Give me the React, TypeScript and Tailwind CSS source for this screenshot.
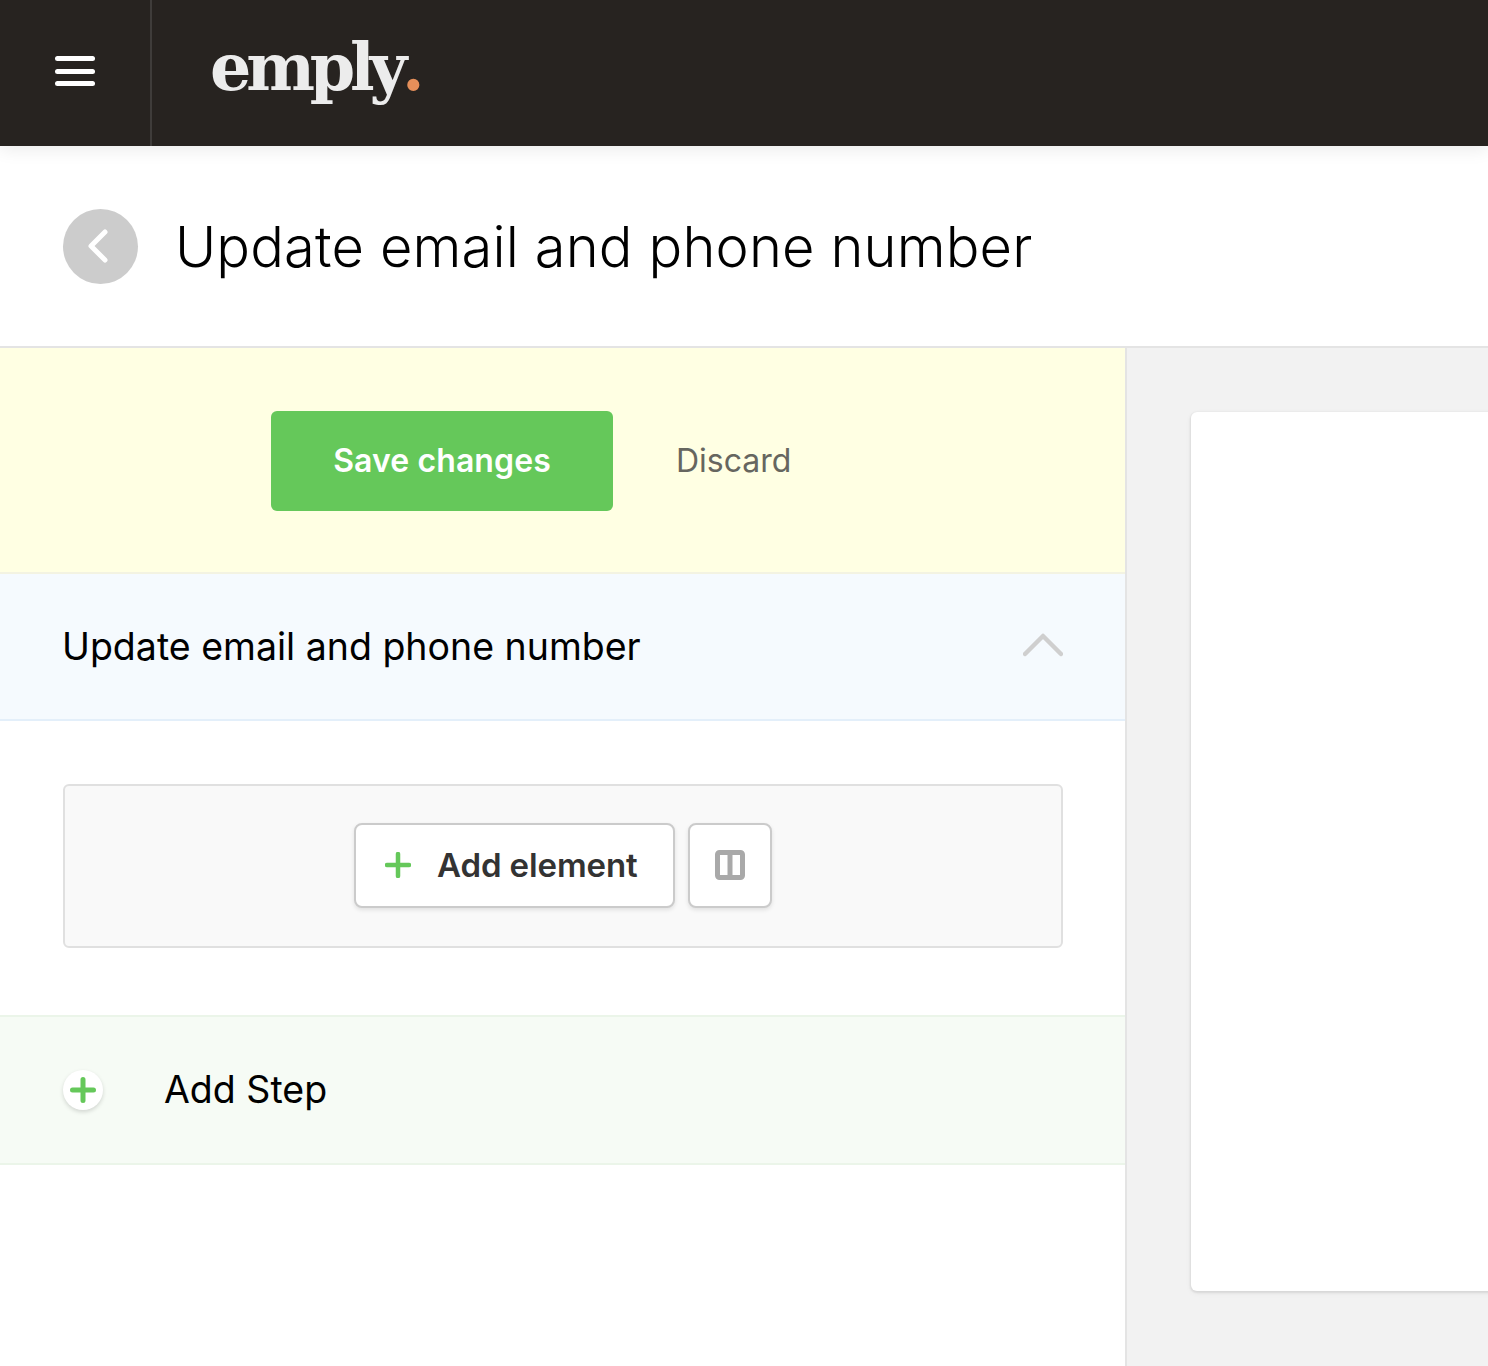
export default function App() {
  const sans = "font-['Inter','Lato',sans-serif]";
  return (
    <div className={`h-[1366px] w-[1488px] overflow-hidden bg-white flex flex-col ${sans}`}>
      <header className="relative z-10 flex h-[146px] shrink-0 bg-[#272320] shadow-[0_4px_16px_rgba(0,0,0,0.08)]">
        <div className="flex w-[152px] shrink-0 items-center justify-center border-r-2 border-[#3f3c3a]">
          <div className="mb-[4px] flex w-[40px] flex-col gap-[7.5px]">
            <span className="h-[5px] rounded-full bg-white" />
            <span className="h-[5px] rounded-full bg-white" />
            <span className="h-[5px] rounded-full bg-white" />
          </div>
        </div>
        <div className="ml-[58px] flex items-center pb-[12px] font-['DejaVu_Serif',serif] text-[65px] font-bold leading-none tracking-[-5.2px] text-[#ececec]">
          emply<span className="text-[#e58f5a]">.</span>
        </div>
      </header>
      <div className="flex h-[202px] shrink-0 items-center gap-[37px] border-b-2 border-[#e4e4e4] pl-[63px]">
        <div className="flex h-[75px] w-[75px] items-center justify-center rounded-full bg-[#cccccc]">
          <svg width="24" height="36" viewBox="0 0 24 36" fill="none" stroke="#fff" strokeWidth="5" strokeLinecap="round" strokeLinejoin="round" className="mr-[4px]">
            <path d="M18 4 L4 18 L18 32" />
          </svg>
        </div>
        <h1 className="pt-[2px] text-[56px] font-light leading-none tracking-[0.15px] text-black">Update email and phone number</h1>
      </div>
      <div className="flex min-h-0 flex-1">
        <div className="w-[1127px] shrink-0 border-r-2 border-[#e4e4e4]">
          <div className="flex h-[226px] items-center border-b-2 border-[#f3f3e2] bg-[#ffffe3] pl-[271px] pt-[2px]">
            <button className="flex h-[100px] w-[342px] items-center justify-center rounded-[6px] bg-[#65c85a] text-[32px] font-semibold tracking-[0.1px] text-white">Save changes</button>
            <span className="ml-[63px] text-[32px] text-[#66665f]">Discard</span>
          </div>
          <div className="flex h-[147px] items-center justify-between border-b-2 border-[#e3effa] bg-[#f5fafe] pl-[62px] pr-[62px]">
            <span className="text-[37.5px] leading-none text-black">Update email and phone number</span>
            <svg width="40" height="24" viewBox="0 0 40 24" fill="none" stroke="#cfcfcf" strokeWidth="4.5" strokeLinecap="round" strokeLinejoin="round" className="mb-[4px]">
              <path d="M2 21 L20 3 L38 21" />
            </svg>
          </div>
          <div className="h-[294px] px-[63px] pt-[63px]">
            <div className="flex h-[164px] w-[1000px] items-center justify-center gap-[13px] rounded-[6px] border-2 border-[#e0e0e0] bg-[#f9f9f9] pb-[1px]">
              <button className="flex h-[85px] w-[321px] items-center rounded-[8px] border-2 border-[#cbcbcb] bg-white pb-[1px] pl-[29px] shadow-[0_2px_4px_rgba(0,0,0,0.1)]">
                <svg width="26" height="26" viewBox="0 0 26 26" fill="none" stroke="#65c85a" strokeWidth="4.5" strokeLinecap="round">
                  <path d="M13 2 V24 M2 13 H24" />
                </svg>
                <span className="ml-[26px] text-[33px] font-semibold leading-none tracking-[-0.1px] text-[#333333]">Add element</span>
              </button>
              <button className="flex h-[85px] w-[84px] items-center justify-center rounded-[8px] border-2 border-[#cbcbcb] bg-white pb-[1px] shadow-[0_2px_4px_rgba(0,0,0,0.1)]">
                <svg width="30" height="30" viewBox="0 0 30 30" fill="none" stroke="#a9a9a9" strokeWidth="5">
                  <rect x="2.5" y="2.5" width="25" height="25" rx="2" />
                  <path d="M15 2 V28" />
                </svg>
              </button>
            </div>
          </div>
          <div className="flex h-[150px] items-center border-y-2 border-[#ebf5e9] bg-[#f6fbf5] pl-[63px]">
            <div className="flex h-[40px] w-[40px] items-center justify-center rounded-full bg-white shadow-[0_2px_4px_rgba(0,0,0,0.15)]">
              <svg width="26" height="26" viewBox="0 0 26 26" fill="none" stroke="#65c85a" strokeWidth="5" strokeLinecap="round">
                <path d="M13 2.5 V23.5 M2.5 13 H23.5" />
              </svg>
            </div>
            <span className="ml-[61px] text-[37.5px] leading-none text-black">Add Step</span>
          </div>
        </div>
        <div className="min-w-0 flex-1 overflow-hidden bg-[#f2f2f2] pl-[64px] pt-[64px]">
          <div className="h-[879px] w-[600px] rounded-[6px] bg-white shadow-[0_1px_2px_1px_rgba(0,0,0,0.08),0_2px_6px_rgba(0,0,0,0.05)]" />
        </div>
      </div>
    </div>
  );
}
